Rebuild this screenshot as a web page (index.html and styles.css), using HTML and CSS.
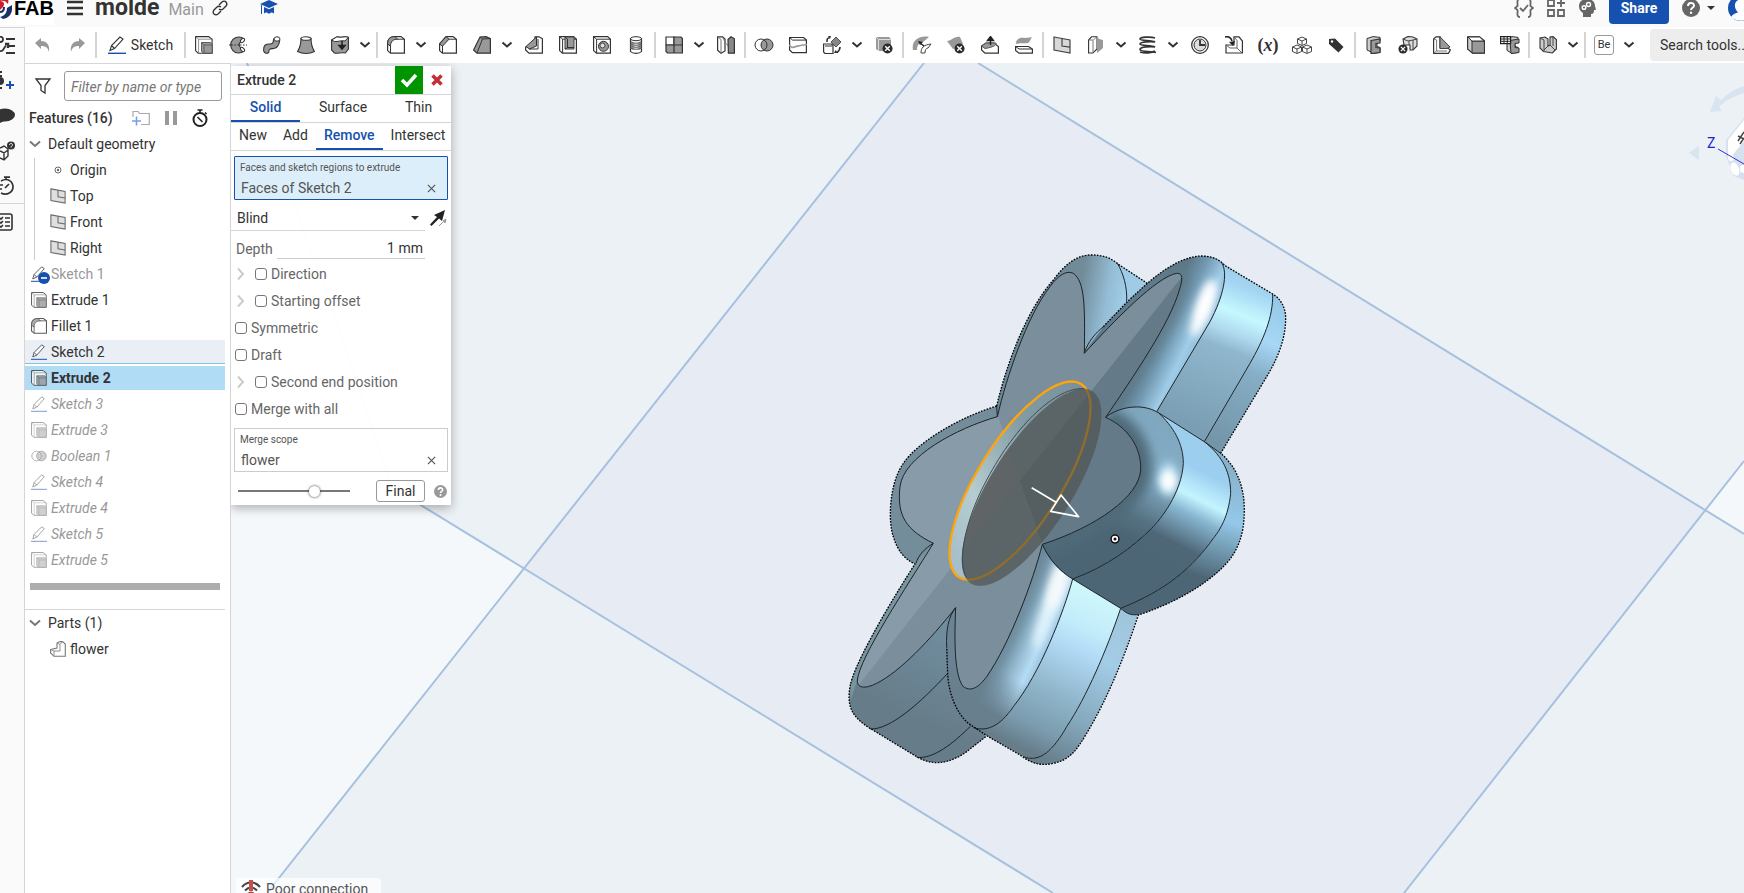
FILE: index.html
```html
<!DOCTYPE html>
<html lang="en">
<head>
    <meta charset="UTF-8">
    <meta name="viewport" content="width=device-width, initial-scale=1.0">
    <title>molde | Main</title>
    <link rel="stylesheet" href="styles.css">
</head>
<body>
    <!-- Shared icons -->
    <svg class="sprite" width="0" height="0" aria-hidden="true">
        <symbol id="i-caret" viewBox="0 0 12 8"><path d="M1.500 1.500L6 5.500l4.500-4" fill="none" stroke="#333" stroke-width="2"/></symbol>
        <symbol id="i-pencil" viewBox="0 0 18 18"><path d="M2 14.500l1.500-5L12 1l3 2-8.500 9.500zM3.500 9.500l3 3" fill="#fff" stroke="#333" stroke-width="1.100"/><path d="M0 17.300h18" stroke="#1651b0" stroke-width="1.400"/></symbol>
        <symbol id="i-extrude" viewBox="0 0 18 18"><path d="M.6.6h13l3.500 2.600v14h-14L.6 14.600z" fill="#fff" stroke="#333" stroke-width="1.100"/><path d="M.6.6l3 2.600v14M3.600 3.200h13.500" fill="none" stroke="#777" stroke-width=".8"/><path d="M6.500 6.500h9l1.700 2v8.700H8.500l-2-2z" fill="#999" stroke="#444" stroke-width=".8"/><path d="M6.500 6.500l2.500 2.500v8M9 9h8" fill="none" stroke="#555" stroke-width=".8"/></symbol>
        <symbol id="i-fillet" viewBox="0 0 18 18"><path d="M.6 8C.6 3 3 .6 8 .6h6l3.400 2.600v14H3.500L.6 14.600z" fill="#fff" stroke="#333" stroke-width="1.200"/><path d="M.6 8C.6 3 3 .6 8 .6l2.500 2.600c-4.500 0-7 2.300-7 7z" fill="#999" stroke="#333"/><path d="M3.500 10v7M10 3.200h7" stroke="#333" fill="none"/></symbol>
        <symbol id="i-plane" viewBox="0 0 18 18"><path d="M1 1l16 3v13L1 14z" fill="#d8d8d8" stroke="#444" stroke-width="1.200"/><path d="M9 2.500v7.500l8 1.200" fill="none" stroke="#444" stroke-width="1.200"/></symbol>
        <symbol id="i-boolean" viewBox="0 0 20 18"><circle cx="13" cy="9" r="6" fill="#999" stroke="#333"/><circle cx="7" cy="9" r="6" fill="none" stroke="#333"/></symbol>
        <symbol id="i-badx" viewBox="0 0 12 12"><circle cx="6" cy="6" r="5.500" fill="#2b2b2b"/><path d="M3.500 3.500l5 5m0-5l-5 5" stroke="#fff" stroke-width="1.500"/></symbol>
        <symbol id="i-chev" viewBox="0 0 8 14"><path d="M1 1.500L6 7l-5 5.500" fill="none" stroke="#ccc" stroke-width="2"/></symbol>
        <symbol id="i-x" viewBox="0 0 10 10"><path d="M1 1l8 8M9 1L1 9" stroke="#555" stroke-width="1.300"/></symbol>
        <symbol id="i-frame" viewBox="0 0 18 18"><path d="M2 2.500L8 .6l7 .8v4l-3 1v4l3 1v5l-6 1L2 14z" fill="#ccc" stroke="#333"/><path d="M6 4.500l9-1.500v4l-4 .5v4l4 .5v4.500l-9 1z" fill="#999" stroke="#333" stroke-width="1.200"/></symbol>
    </svg>

    <header class="topbar">
        <div class="topbar-inner">
            <div class="brand">
                <svg width="12" height="26" viewBox="0 0 12 26">
                    <path d="M0 6c3-1 6 0 8 3 1-4 0-7-3-8H0z" fill="#c8202c"/>
                    <path d="M0 6c4 0 5 3 3 6l-3 3z" fill="#c8202c"/>
                    <path d="M12 10c1 7-2 13-9 14l-3-2c5-1 7-5 7-9z" fill="#1b2f6b"/>
                    <path d="M0 17c3 0 4-2 4-5" stroke="#1b2f6b" stroke-width="2" fill="none"/>
                </svg>
                <span class="brand-name">FAB</span>
            </div>
            <button class="icon-btn menu" aria-label="Menu">
                <svg width="16" height="16" viewBox="0 0 16 16"><path d="M0 2h16M0 8h16M0 14h16" stroke="#333" stroke-width="2.500"/></svg>
            </button>
            <h1 class="doc-name">molde</h1>
            <span class="workspace-name">Main</span>
            <button class="icon-btn link" aria-label="Copy link">
                <svg width="16" height="16" viewBox="0 0 16 16" fill="none" stroke="#333" stroke-width="1.400"><path d="M7 5l3-3c1.200-1.200 3-1.200 4 0s1 2.800 0 4l-3 3c-1.200 1-2.800 1-4 0"/><path d="M9 11l-3 3c-1.200 1-2.800 1-4 0s-1-2.800 0-4l3-3c1.200-1 2.800-1 4 0"/></svg>
            </button>
            <button class="icon-btn learn" aria-label="Learning center">
                <svg width="18" height="18" viewBox="0 0 18 18" fill="#1651b0"><path d="M0 5l9-4 9 4-9 4z"/><path d="M4 8l5 2.300L14 8v6.500c-2-1.500-3-1.500-5 .5-2-2-3-2-5-.5z"/><path d="M1.500 6v9" stroke="#1651b0"/></svg>
            </button>
            <div class="topbar-right">
                <button class="icon-btn" aria-label="Checks">
                    <svg width="20" height="20" viewBox="0 0 20 20" fill="none" stroke="#666" stroke-width="1.800"><path d="M6 1C2 1 4 6 3.500 8L1 10l2.500 2C4 14 2 19 6 19M14 1c4 0 2 5 2.500 7L19 10l-2.500 2c-.5 2 1.500 7-2.500 7M6 10l3 3 5-6"/></svg>
                </button>
                <button class="icon-btn" aria-label="App store">
                    <svg width="18" height="18" viewBox="0 0 18 18" fill="none" stroke="#666" stroke-width="1.800"><path d="M1 1h6v6H1zM1 11h6v6H1zM11 11h6v6h-6zM14 0v8M10 4h8"/></svg>
                </button>
                <button class="icon-btn" aria-label="AI advisor">
                    <svg width="18" height="20" viewBox="0 0 18 20"><path d="M9 1c5 0 8 3 8 7l1 4h-2c0 3-1 4-3 4v3H5v-4C2 13 1 11 1 8c0-4 3-7 8-7z" fill="#666"/><circle cx="6" cy="9.500" r="1.800" fill="none" stroke="#fff" stroke-width="1.500"/><circle cx="10.500" cy="6.500" r="2" fill="none" stroke="#fff" stroke-width="1.500"/></svg>
                </button>
                <button class="share">Share</button>
                <button class="icon-btn help" aria-label="Help">
                    <svg width="18" height="18" viewBox="0 0 18 18"><circle cx="9" cy="9" r="9" fill="#666"/><path d="M6 7c0-4 6-4 6-.5C12 9 9 8.500 9 11" fill="none" stroke="#fff" stroke-width="2"/><circle cx="9" cy="13.800" r="1.200" fill="#fff"/></svg>
                    <svg width="8" height="4" viewBox="0 0 8 4"><path d="M0 0h8L4 4z" fill="#333"/></svg>
                </button>
                <button class="icon-btn avatar" aria-label="Account">
                    <svg width="26" height="26" viewBox="0 0 26 26"><circle cx="13" cy="13" r="13" fill="#1651b0"/><path d="M3 22c2-3 5-4 7-4.500-5-5-4-13 3-13s8 8 3 13c2 .5 5 1.500 7 4.500-6 5-14 5-20 0z" fill="#fff"/></svg>
                </button>
            </div>
        </div>
    </header>

    <div class="main">
        <aside class="rail">
            <button aria-label="Feature list"><svg width="17" height="20" viewBox="0 0 17 20" fill="none" stroke="#333" stroke-width="1.800"><path d="M6 3h9M9 10h6M6 17h9"/><path d="M0 1c4-1 4 5 0 5M0 15c4 1 4-5 6-5"/><path d="M5 8h3v4" stroke-width="2.500"/></svg></button>
            <button aria-label="Insert"><svg width="17" height="20" viewBox="0 0 17 20"><path d="M0 1h2M0 5h2M0 17h2" stroke="#333" stroke-width="2"/><circle cx="0" cy="10" r="4" fill="#333"/><path d="M6 14h8M10 10v8" stroke="#1651b0" stroke-width="2"/></svg></button>
            <button aria-label="Comments"><svg width="17" height="20" viewBox="0 0 17 20"><ellipse cx="5" cy="9" rx="10" ry="6.500" fill="#333"/><path d="M-2 13v5l6-3z" fill="#333"/></svg></button>
            <button aria-label="Part help"><svg width="17" height="20" viewBox="0 0 17 20"><path d="M0 7l4-2 4 3v7l-4 4-4-2M0 10l4 2 4-3M4 12v6" fill="none" stroke="#333" stroke-width="1.400"/><circle cx="11" cy="4.500" r="4" fill="#333"/><path d="M9.500 4c0-2 3-2 3 0 0 1-1.500 1-1.500 2.500" stroke="#fff" fill="none"/></svg></button>
            <button aria-label="Versions"><svg width="17" height="20" viewBox="0 0 17 20" fill="none" stroke="#333" stroke-width="1.700"><path d="M1 5c7-4 12 1 12 6s-6 9-12 6M4 1.200h6M6 1v3M0 9h3M0 13h2M5 12l4-4"/></svg></button>
            <hr>
            <button aria-label="Tasks"><svg width="17" height="20" viewBox="0 0 17 20" fill="none" stroke="#333" stroke-width="1.600"><path d="M0 2h10c1.500 0 2 .5 2 2v12c0 1.500-.5 2-2 2H0M5 6h5M5 10h5M5 14h5M0 6l1 1 2-2M0 10l1 1 2-2M0 14l1 1 2-2"/></svg></button>
        </aside>

        <div class="studio">
            <div class="toolbar">
                <button class="tool" aria-label="Undo"><svg width="16" height="16" viewBox="0 0 16 16"><path d="M0 6l6-5v3c6 0 9 4 8 11-1-4-3-6-8-6v3z" fill="#999"/></svg></button>
                <button class="tool" aria-label="Redo"><svg width="16" height="16" viewBox="0 0 16 16"><path d="M16 6l-6-5v3C4 4 1 8 2 15c1-4 3-6 8-6v3z" fill="#999"/></svg></button>
                <span class="sep"></span>
                <button class="tool sketch"><svg width="18" height="18"><use href="#i-pencil"/></svg>Sketch</button>
                <span class="sep"></span>
                <button class="tool" aria-label="Extrude"><svg width="18" height="18"><use href="#i-extrude"/></svg></button>
                <button class="tool" aria-label="Revolve"><svg width="18" height="18" viewBox="0 0 18 18"><path d="M15 3a8 8 0 1 0 0 12l-2.500-3a4 4 0 0 1-2.500-3 4 4 0 0 1 3-3.500z" fill="#999" stroke="#333" stroke-width="1.100"/><ellipse cx="13.500" cy="4.500" rx="1.500" ry="2.500" transform="rotate(45 13.500 4.500)" fill="#fff" stroke="#333"/><ellipse cx="13.500" cy="13.500" rx="1.500" ry="2.500" transform="rotate(-45 13.500 13.500)" fill="#fff" stroke="#333"/><path d="M0 9h18" stroke="#333" stroke-dasharray="4 1.500 1.500 1.500"/></svg></button>
                <button class="tool" aria-label="Sweep"><svg width="18" height="18" viewBox="0 0 18 18"><path d="M.7 15c-.5-6 2-7 6-7s3.300-2 4-5l6 1.500c-.7 5-2 7.500-6 8-4 .4-4.700 0-5 4-1.500 1.300-4 1-5-1.500z" fill="#999" stroke="#333" stroke-width="1.100"/><ellipse cx="14" cy="3" rx="3" ry="2.200" fill="#fff" stroke="#333"/></svg></button>
                <button class="tool" aria-label="Loft"><svg width="18" height="18" viewBox="0 0 18 18"><path d="M4 2.500c0 6-1.500 10-3.500 13 5 2.500 12 2.500 17 0-2-3-3.500-7-3.500-13z" fill="#999" stroke="#333" stroke-width="1.100"/><ellipse cx="9" cy="2.500" rx="5" ry="1.800" fill="#fff" stroke="#333" stroke-width="1.100"/></svg></button>
                <button class="tool" aria-label="Thicken"><svg width="18" height="18" viewBox="0 0 18 18"><path d="M.6 4L6 .8c4 1.500 8-1 11.400.5V13l-3 4c-4-1-8 1-11 0l-2.800-3z" fill="#999" stroke="#333" stroke-width="1.100"/><path d="M.6 4L6 .8c4 1.500 8-1 11.400.5L14 5C10 4 7 6 3.500 5.500z" fill="#fff" stroke="#333"/><path d="M11 5v5M8 9.500l3 3.500 3-3.500z" stroke="#222" stroke-width="1.500" fill="#222"/></svg></button>
                <button class="drop" aria-label="More solid tools"><svg width="12" height="8"><use href="#i-caret"/></svg></button>
                <span class="sep"></span>
                <button class="tool" aria-label="Fillet"><svg width="18" height="18"><use href="#i-fillet"/></svg></button>
                <button class="drop" aria-label="More fillets"><svg width="12" height="8"><use href="#i-caret"/></svg></button>
                <button class="tool" aria-label="Chamfer"><svg width="18" height="18" viewBox="0 0 18 18"><path d="M.6 8L7 .6h7l3.400 2.600v14H3.500L.6 14.600z" fill="#fff" stroke="#333" stroke-width="1.200"/><path d="M.6 8L7 .6l3 2.600-6.500 7z" fill="#999" stroke="#333"/><path d="M3.500 10v7M10 3.200h7" stroke="#333"/></svg></button>
                <button class="tool" aria-label="Draft"><svg width="18" height="18" viewBox="0 0 18 18"><path d="M.6 14L7 1l6-.4 4.400 2v14.600H4z" fill="#999" stroke="#333" stroke-width="1.200"/><path d="M4 17L9.500 3 17 2.600M9.500 3L7 1" fill="none" stroke="#333"/></svg></button>
                <button class="drop" aria-label="More drafts"><svg width="12" height="8"><use href="#i-caret"/></svg></button>
                <button class="tool" aria-label="Rib"><svg width="18" height="18" viewBox="0 0 18 18"><path d="M.6 11L10 8V.8h4l3.400 2v14.400H4L.6 14z" fill="#fff" stroke="#333" stroke-width="1.200"/><path d="M1 10.500L11.500 1v9l-7 3z" fill="#999" stroke="#333"/><path d="M13 3v10H4" fill="none" stroke="#333"/></svg></button>
                <button class="tool" aria-label="Shell"><svg width="18" height="18" viewBox="0 0 18 18"><path d="M.6.6h14l2.800 2.600v14H3.500L.6 14.600z" fill="#fff" stroke="#333" stroke-width="1.200"/><path d="M.6.6l3 2.600v14M3.600 3.200h14" stroke="#333" fill="none"/><path d="M6 1h9v12H6z" fill="#999" stroke="#444"/><path d="M6 1l2.500 2v8.500H15M8.500 11.500L6 13" fill="none" stroke="#333"/></svg></button>
                <button class="tool" aria-label="Hole"><svg width="18" height="18" viewBox="0 0 18 18"><path d="M.6.6h14l2.800 2.600v14H3.500L.6 14.600z" fill="#fff" stroke="#333" stroke-width="1.200"/><path d="M.6.6l3 2.600v14M3.600 3.200h14" stroke="#333" fill="none"/><circle cx="10.500" cy="10.300" r="5" fill="#999" stroke="#333"/><circle cx="9.500" cy="9.500" r="2.500" fill="#ddd" stroke="#444"/></svg></button>
                <button class="tool" aria-label="Thread"><svg width="18" height="18" viewBox="0 0 18 18"><path d="M3.500 2.500v13c2 2.500 9 2.500 11 0v-13z" fill="#fff" stroke="#333" stroke-width="1.200"/><path d="M3.500 6c3 1.500 8 1.500 11 0M3.500 8c3 1.500 8 1.500 11 0M3.500 10c3 1.500 8 1.500 11 0M3.500 12c3 1.500 8 1.500 11 0" fill="none" stroke="#666" stroke-width="1.400"/><ellipse cx="9" cy="2.700" rx="5.500" ry="2" fill="#fff" stroke="#333"/></svg></button>
                <span class="sep"></span>
                <button class="tool" aria-label="Pattern"><svg width="18" height="18" viewBox="0 0 18 18" stroke="#333" stroke-width="1.200" fill="#999"><path d="M1 1h8v8H1z" fill="#fff"/><path d="M9 1h7l1.400 1.500V9H9zM1 9h8v8H2.500L1 15.500zM9 9h8.400v8H9z"/></svg></button>
                <button class="drop" aria-label="More patterns"><svg width="12" height="8"><use href="#i-caret"/></svg></button>
                <button class="tool" aria-label="Mirror"><svg width="18" height="18" viewBox="0 0 18 18"><path d="M.6.8h5L8 3v12l-4 2.200-3.400-3z" fill="#fff" stroke="#333" stroke-width="1.200"/><path d="M.6.8L4 3.500v13.500M5.500 1l3 6 3 3" fill="none" stroke="#777"/><path d="M11 3.500L14 .8l3.400 2v14.400h-6z" fill="#888" stroke="#333" stroke-width="1.200"/></svg></button>
                <span class="sep"></span>
                <button class="tool" aria-label="Boolean"><svg width="20" height="18"><use href="#i-boolean"/></svg></button>
                <button class="tool" aria-label="Split"><svg width="18" height="18" viewBox="0 0 18 18"><path d="M.6 1.500h14l2.800 2.600v12.600h-14L.6 14z" fill="#fff" stroke="#333" stroke-width="1.200"/><path d="M.6 1.500l3 2.600h14" fill="none" stroke="#333"/><path d="M0 9l3 2.500c5-1 7-2.500 15-3" fill="none" stroke="#999" stroke-width="1.600"/></svg></button>
                <button class="tool" aria-label="Transform"><svg width="18" height="18" viewBox="0 0 18 18"><path d="M.6 8h8l1.400 1.500v8H2L.6 16zM2 10h7" fill="#fff" stroke="#333" stroke-width="1.200"/><path d="M13 1l5 5-5 5-5-5z" fill="#888" stroke="#555"/><path d="M4 6c0-3 0-4 3-4.500M17 11c0 3-1 4-3 5.500" fill="none" stroke="#333" stroke-width="1.600"/><path d="M5 0h3L7 3zM11 17l1.500-3 2.500 3z" fill="#333"/></svg></button>
                <button class="drop" aria-label="More transforms"><svg width="12" height="8"><use href="#i-caret"/></svg></button>
                <button class="tool" aria-label="Delete part"><svg width="18" height="18" viewBox="0 0 18 18"><path d="M1 1h13l2 2v12H3.500L1 13z" fill="#999"/><path d="M1 1l2.500 2.500V15M3.500 3.500H16" stroke="#ddd" fill="none"/><use href="#i-badx" x="7" y="7" width="11" height="11"/></svg></button>
                <span class="sep"></span>
                <button class="tool" aria-label="Modify fillet"><svg width="20" height="18" viewBox="0 0 20 18"><path d="M1 14C-1 5 7-1 17 1L11 6c-4 1-6 3-6 8z" fill="#999"/><path d="M9 17c0-5 2-8 10-9l-3 4c-2 0-3 2-3 5z" fill="#fff" stroke="#444"/><path d="M12 10L8 7" stroke="#222" stroke-width="1.500"/><path d="M6 5l5 1-3 3z" fill="#222"/></svg></button>
                <button class="tool" aria-label="Delete face"><svg width="18" height="18" viewBox="0 0 18 18"><path d="M0 5c5 0 7-5 13-4l3 7c-5 0-6 4-10 5z" fill="#999"/><use href="#i-badx" x="7" y="7" width="11" height="11"/></svg></button>
                <button class="tool" aria-label="Move face"><svg width="18" height="18" viewBox="0 0 18 18"><path d="M.6 10L5 7h8l4.400 3.500v6.700H4L.6 14z" fill="#fff" stroke="#333" stroke-width="1.200"/><path d="M.6 10L5 7h10c1 1-1 4-11 5.500z" fill="#999" stroke="#555"/><path d="M9.500 9V3M6.500 4.500l3-4 3 4z" stroke="#222" stroke-width="1.400" fill="#222"/></svg></button>
                <button class="tool" aria-label="Replace face"><svg width="18" height="18" viewBox="0 0 18 18"><path d="M.6 10.500h13l3.800 2.500v4.200H4L.6 14.500z" fill="#fff" stroke="#333" stroke-width="1.200"/><path d="M.6 10.500L4 13h13" fill="none" stroke="#333"/><path d="M1 8c0-3 1-5 4-6 3-.5 6 .5 12-1-2 3-2 5-4 6-5 .5-8-.5-12 1z" fill="#999"/></svg></button>
                <span class="sep"></span>
                <button class="tool" aria-label="Plane"><svg width="18" height="18"><use href="#i-plane"/></svg></button>
                <button class="tool" aria-label="Split plane"><svg width="18" height="18" viewBox="0 0 18 18"><path d="M1.600 4l3-3.200H10V13l-4 4H1.600z" fill="#fff" stroke="#333" stroke-width="1.100"/><path d="M6 17V4.500L9.500 1M1.600 4H6" fill="none" stroke="#777"/><path d="M10 0l2 3 4 1v8l-6 5z" fill="#999"/></svg></button>
                <button class="drop" aria-label="More planes"><svg width="12" height="8"><use href="#i-caret"/></svg></button>
                <button class="tool" aria-label="Helix"><svg width="18" height="18" viewBox="0 0 18 18" fill="none" stroke="#333" stroke-width="1.700"><path d="M16 2C12 .5 1 1 1 3s12 1 15 3C12 5 1 6 1 8s12 1 15 3c-4-1-15 0-15 2.500S12 15 17 16.500"/><path d="M1 16c5 1.500 12 1 15-1"/></svg></button>
                <button class="drop" aria-label="More curves"><svg width="12" height="8"><use href="#i-caret"/></svg></button>
                <button class="tool" aria-label="Mass clock"><svg width="18" height="18" viewBox="0 0 18 18" fill="none" stroke="#333"><circle cx="9" cy="9" r="8.300" stroke-width="1.300"/><circle cx="9" cy="9" r="6" fill="#ddd"/><path d="M9 4v5h5" stroke-width="1.800"/></svg></button>
                <button class="tool" aria-label="Derived"><svg width="18" height="18" viewBox="0 0 18 18"><path d="M1 9v8h16.400V5L14 .8H9V9z" fill="#fff" stroke="#333" stroke-width="1.200"/><path d="M9 .8l3 3.700V12H5l-4-3M12 12l5 5" fill="none" stroke="#666"/><path d="M0 1c4-1 6 1 7 4" stroke="#222" stroke-width="1.600" fill="none"/><path d="M4 6l6-1-2 5z" fill="#222"/></svg></button>
                <button class="tool variable" aria-label="Variable">(<i>x</i>)</button>
                <button class="tool" aria-label="Composite part"><svg width="20" height="18" viewBox="0 0 20 18" fill="#fff" stroke="#444"><path d="M5.500 3l4.500-2 4.500 2v4.500L10 9.500l-4.500-2zM.5 11L5 9l4.500 2v4.500L5 17.500.5 15.500zM10.500 11L15 9l4.500 2v4.500l-4.500 2-4.500-2z"/><path d="M5.500 3L10 5l4.500-2M10 5v4M.5 11L5 13l4.500-2M5 13v4M10.500 11l4.500 2 4.500-2M15 13v4" fill="none"/></svg></button>
                <button class="tool" aria-label="Tag"><svg width="18" height="18" viewBox="0 0 18 18"><path d="M2 3l6-.5 8.500 8.500-5 5.500L2 8z" fill="#333"/><circle cx="5" cy="5.500" r="1.200" fill="#fff"/></svg></button>
                <span class="sep"></span>
                <button class="tool" aria-label="Frame"><svg width="18" height="18"><use href="#i-frame"/></svg></button>
                <button class="tool" aria-label="Frame trim"><svg width="20" height="18" viewBox="0 0 20 18"><path d="M5 3l5-2.500 5 .5 4 2v7l-4 4h-3V9H6z" fill="#ddd" stroke="#333" stroke-width="1.100"/><path d="M5 3l5 2 5-1 4-1M11 5v4M15 4v10" fill="none" stroke="#444"/><use href="#i-badx" x="0" y="8" width="10" height="10"/></svg></button>
                <button class="tool" aria-label="Gusset"><svg width="18" height="18" viewBox="0 0 18 18"><path d="M.6 3L3 .8h4v11h7l3.400 2-2 3.500H.6z" fill="#fff" stroke="#333" stroke-width="1.200"/><path d="M7 .8L17 11l-3 1.500H7z" fill="#999" stroke="#444"/><path d="M.6 3l3 1v11L.6 17M3.600 15H14" fill="none" stroke="#777"/></svg></button>
                <button class="tool" aria-label="End cap"><svg width="18" height="18" viewBox="0 0 18 18"><path d="M.6.8h12l4.800 4v12.400h-12L.6 13z" fill="#ccc" stroke="#333" stroke-width="1.200"/><path d="M5 5h12.400v12H5z" fill="#999" stroke="#333"/><path d="M1 1l4 4h12l-4.500-4z" fill="#fff" stroke="#333"/></svg></button>
                <button class="tool" aria-label="Cut list"><svg width="20" height="18" viewBox="0 0 20 18"><path d="M7 2.500L12 .6l6 .8v4l-3 1v4l3 1v5l-6 1-5-3z" fill="#ccc" stroke="#333"/><path d="M10 4.500l9-1.500v4l-4 .5v4l4 .5v4.500l-8 1z" fill="#999" stroke="#333"/><path d="M.6.6h10v7H.6z" fill="#fff" stroke="#222" stroke-width="1.200"/><path d="M.6 3h10M.6 5.300h10M4 .6v7M7.300.6v7" stroke="#222"/></svg></button>
                <span class="sep"></span>
                <button class="tool" aria-label="Sheet metal"><svg width="18" height="18" viewBox="0 0 18 18"><path d="M1 2l5-1 3 2v7l2-1V1l3-.4 3.400 3V13l-4 4-9-1.500L1 12z" fill="#ccc" stroke="#333" stroke-width="1.100"/><path d="M1 2l4 2v11M9 10l-4 4M11 9l5 5M14 1v9" fill="none" stroke="#444"/></svg></button>
                <button class="drop" aria-label="More sheet metal"><svg width="12" height="8"><use href="#i-caret"/></svg></button>
                <span class="sep"></span>
                <button class="tool" aria-label="Custom feature"><span class="be">Be</span></button>
                <button class="drop" aria-label="More custom features"><svg width="12" height="8"><use href="#i-caret"/></svg></button>
                <input class="search-tools" type="text" placeholder="Search tools..." aria-label="Search tools">
            </div>

            <div class="workspace">
                <section class="tree">
                    <div class="filter">
                        <svg width="18" height="18" viewBox="0 0 18 18"><path d="M2 2h14l-5 6.500V16l-4-2.500v-5z" fill="#fff" stroke="#333" stroke-width="1.300"/></svg>
                        <input type="text" placeholder="Filter by name or type" aria-label="Filter by name or type">
                    </div>
                    <div class="tree-head">
                        <h2>Features (16)</h2>
                        <button class="icon-btn" aria-label="Add folder"><svg width="18" height="16" viewBox="0 0 18 16"><path d="M1 7V1.500h5l1.500 2H17.300v11H9" fill="none" stroke="#aaa" stroke-width="1.200"/><path d="M0 11h9M4.500 6.500v9" stroke="#7e9fdb" stroke-width="1.600"/></svg></button>
                        <button class="icon-btn" aria-label="Suspend"><svg width="12" height="14" viewBox="0 0 12 14"><path d="M0 0h4v14H0zM8 0h4v14H8z" fill="#999"/></svg></button>
                        <button class="icon-btn" aria-label="Regeneration times"><svg width="16" height="18" viewBox="0 0 16 18"><circle cx="8" cy="10.500" r="6.500" fill="none" stroke="#222" stroke-width="2"/><path d="M5.500 1h5M8 1v3M10.500 13L5.500 8M13 3.500l1.500 1.500" stroke="#222" stroke-width="1.600"/></svg></button>
                    </div>
                    <ul class="features">
                        <li class="folder"><svg width="12" height="8" viewBox="0 0 12 8"><path d="M1 1.500l5 4.500 5-4.500" fill="none" stroke="#555" stroke-width="2"/></svg>Default geometry</li>
                        <li class="nested">
                            <ul>
                                <li><svg width="16" height="16" viewBox="0 0 16 16"><circle cx="8" cy="8" r="3" fill="none" stroke="#444"/><circle cx="8" cy="8" r="1.200" fill="#444"/></svg>Origin</li>
                                <li><svg width="16" height="16"><use href="#i-plane"/></svg>Top</li>
                                <li><svg width="16" height="16"><use href="#i-plane"/></svg>Front</li>
                                <li><svg width="16" height="16"><use href="#i-plane"/></svg>Right</li>
                            </ul>
                        </li>
                        <li class="hidden-sketch"><svg width="16" height="16"><use href="#i-pencil"/></svg>Sketch 1<svg class="badge" width="12" height="12" viewBox="0 0 12 12"><circle cx="6" cy="6" r="6" fill="#1651b0"/><path d="M3 6h6" stroke="#fff" stroke-width="1.600"/></svg></li>
                        <li><svg width="16" height="16"><use href="#i-extrude"/></svg>Extrude 1</li>
                        <li><svg width="16" height="16"><use href="#i-fillet"/></svg>Fillet 1</li>
                        <li class="hovered"><svg width="16" height="16"><use href="#i-pencil"/></svg>Sketch 2</li>
                        <li class="selected"><svg width="16" height="16"><use href="#i-extrude"/></svg>Extrude 2</li>
                        <li class="rolled"><svg width="16" height="16"><use href="#i-pencil"/></svg>Sketch 3</li>
                        <li class="rolled"><svg width="16" height="16"><use href="#i-extrude"/></svg>Extrude 3</li>
                        <li class="rolled"><svg width="16" height="16"><use href="#i-boolean"/></svg>Boolean 1</li>
                        <li class="rolled"><svg width="16" height="16"><use href="#i-pencil"/></svg>Sketch 4</li>
                        <li class="rolled"><svg width="16" height="16"><use href="#i-extrude"/></svg>Extrude 4</li>
                        <li class="rolled"><svg width="16" height="16"><use href="#i-pencil"/></svg>Sketch 5</li>
                        <li class="rolled"><svg width="16" height="16"><use href="#i-extrude"/></svg>Extrude 5</li>
                    </ul>
                    <div class="rollback"></div>
                    <ul class="features parts">
                        <li class="folder"><svg width="12" height="8" viewBox="0 0 12 8"><path d="M1 1.500l5 4.500 5-4.500" fill="none" stroke="#555" stroke-width="2"/></svg>Parts (1)</li>
                        <li class="part"><svg width="16" height="16" viewBox="0 0 16 16"><path d="M.6 8.500L7 7V2l3-1.400h2.500L15.300 3v12.300H4L.6 12z" fill="#fff" stroke="#555" stroke-width="1.100"/><path d="M7 2l3 1.500V10H4L.6 8.500M4 10v5M10 3.500l2.500-3" fill="none" stroke="#777"/></svg>flower</li>
                    </ul>
                </section>

                <main class="viewport">
                    <svg class="scene" viewBox="231 63 1513 830" preserveAspectRatio="xMinYMin slice" role="img" aria-label="flower part">
                        <defs>
                            <linearGradient id="gA" gradientUnits="userSpaceOnUse" x1="630" y1="160" x2="860" y2="200"><stop offset="0" stop-color="#6c8796"/><stop offset=".4" stop-color="#738c9a"/><stop offset=".75" stop-color="#93bcd5"/><stop offset="1" stop-color="#a3cfea"/></linearGradient>
                            <linearGradient id="gB" gradientUnits="userSpaceOnUse" x1="975" y1="240" x2="1120" y2="310"><stop offset="0" stop-color="#5c7888"/><stop offset=".3" stop-color="#7198b0"/><stop offset=".65" stop-color="#9fcce8"/><stop offset="1" stop-color="#88b4ce"/></linearGradient>
                            <linearGradient id="gBs" gradientUnits="userSpaceOnUse" x1="1270" y1="130" x2="1090" y2="600"><stop offset="0" stop-color="#9accec"/><stop offset=".12" stop-color="#a4d6f2"/><stop offset=".28" stop-color="#c6f8ff"/><stop offset=".4" stop-color="#aed8ee"/><stop offset=".5" stop-color="#8fb6cc"/><stop offset="1" stop-color="#7a9fb5"/></linearGradient>
                            <linearGradient id="gBo" gradientUnits="userSpaceOnUse" x1="1300" y1="200" x2="1130" y2="640"><stop offset="0" stop-color="#94c6e6"/><stop offset=".28" stop-color="#a6d8f6"/><stop offset=".5" stop-color="#86aec6"/><stop offset="1" stop-color="#7395a8"/></linearGradient>
                            <linearGradient id="gC" gradientUnits="userSpaceOnUse" x1="980" y1="560" x2="780" y2="970"><stop offset="0" stop-color="#7ea6bd"/><stop offset=".4" stop-color="#86b0c9"/><stop offset=".68" stop-color="#567282"/><stop offset=".82" stop-color="#4c6574"/></linearGradient>
                            <linearGradient id="gCs" gradientUnits="userSpaceOnUse" x1="1130" y1="640" x2="960" y2="980"><stop offset="0" stop-color="#9ccdec"/><stop offset=".25" stop-color="#9ccff0"/><stop offset=".46" stop-color="#c4f4ff"/><stop offset=".6" stop-color="#86b4cf"/><stop offset=".85" stop-color="#4f6878"/><stop offset="1" stop-color="#4d6675"/></linearGradient>
                            <linearGradient id="gCo" gradientUnits="userSpaceOnUse" x1="1180" y1="720" x2="1080" y2="1040"><stop offset="0" stop-color="#88b2ca"/><stop offset=".45" stop-color="#94c8ea"/><stop offset=".65" stop-color="#7aa5be"/><stop offset="1" stop-color="#4d6676"/></linearGradient>
                            <linearGradient id="gD" gradientUnits="userSpaceOnUse" x1="490" y1="1230" x2="625" y2="1290"><stop offset="0" stop-color="#6b8494"/><stop offset=".3" stop-color="#84a8bd"/><stop offset=".7" stop-color="#b5dcf5"/><stop offset="1" stop-color="#8fb9d3"/></linearGradient>
                            <linearGradient id="gDf" gradientUnits="userSpaceOnUse" x1="500" y1="1330" x2="440" y2="1440"><stop offset="0" stop-color="#687f8d" stop-opacity="0"/><stop offset="1" stop-color="#687f8d"/></linearGradient>
                            <linearGradient id="gDs" gradientUnits="userSpaceOnUse" x1="780" y1="1100" x2="560" y2="1560"><stop offset="0" stop-color="#cdf7fa"/><stop offset=".2" stop-color="#c3ecfa"/><stop offset=".34" stop-color="#b3daf6"/><stop offset=".62" stop-color="#90b6cb"/><stop offset=".85" stop-color="#7b9caf"/><stop offset="1" stop-color="#677d8a"/></linearGradient>
                            <linearGradient id="gDo" gradientUnits="userSpaceOnUse" x1="850" y1="1160" x2="640" y2="1600"><stop offset="0" stop-color="#a0c6dd"/><stop offset=".3" stop-color="#a3cce6"/><stop offset=".7" stop-color="#85a9bd"/><stop offset="1" stop-color="#687f8c"/></linearGradient>
                            <linearGradient id="gE" gradientUnits="userSpaceOnUse" x1="300" y1="1180" x2="180" y2="1450"><stop offset="0" stop-color="#708e9f"/><stop offset="1" stop-color="#677c89"/></linearGradient>
                            <linearGradient id="gCut" gradientUnits="userSpaceOnUse" x1="680" y1="460" x2="360" y2="1040"><stop offset="0" stop-color="#78909b"/><stop offset=".35" stop-color="#829ba4"/><stop offset=".7" stop-color="#b5cdd0"/><stop offset="1" stop-color="#a0bac9"/></linearGradient>
                            <filter id="soft" x="-150%" y="-50%" width="400%" height="200%"><feGaussianBlur stdDeviation="13"/></filter>
                            <filter id="shade" x="-30%" y="-30%" width="160%" height="160%"><feGaussianBlur stdDeviation="16"/></filter>
                            <clipPath id="face"><path d="M472 560C500 440 560 260 630 170C655 135 680 120 700 130C735 155 735 230 733 370C820 275 950 140 1010 130C1030 128 1028 150 1018 180C990 280 880 440 797 562C860 590 905 650 902 720C897 800 770 890 607 943C580 1050 510 1240 440 1340C410 1380 390 1383 370 1370C345 1340 342 1250 347 1133C270 1230 180 1325 110 1360C75 1378 50 1375 52 1350C60 1280 200 1070 280 940C200 900 170 860 180 770C190 680 350 595 472 560z"/></clipPath>
                            <clipPath id="filB"><path d="M731 370C820 270 950 90 1090 78C1125 80 1145 90 1152 107C1160 150 1150 200 1110 275L950 545L797 562z"/></clipPath>
                            <clipPath id="filC"><path d="M797 562C830 535 900 515 955 548C1000 590 1030 640 1030 700C1025 790 960 870 935 895C880 950 800 1010 698 1047C650 1020 620 980 607 943z"/></clipPath>
                            <clipPath id="filD"><path d="M607 943C625 985 660 1025 698 1047C670 1150 600 1330 520 1430C480 1490 440 1505 400 1493C350 1460 325 1400 323 1330L320 1230L347 1133z"/></clipPath>
                            <clipPath id="cut"><ellipse cx="575" cy="772" rx="123" ry="341" transform="rotate(32.300 575 772)"/></clipPath>
                        </defs>

                        <!-- Reference planes -->
                        <rect x="231" y="63" width="1513" height="830" fill="#f4f8fb"/>
                        <path d="M247 63L393 488L1053 893H1744V63z" fill="#ecf1f5"/>
                        <path d="M924 63L267 893H1404L1744 461V63z" fill="#ecf1f5"/>
                        <path d="M924 63L524 568L1053 893H1404L1706 510L978 63z" fill="#e7ebf3"/>
                        <path d="M1744 461L1706 510L1744 534z" fill="#f4f8fb"/>
                        <path d="M924 63L267 893M978 63L1744 534M247 63L393 488L1053 893M1744 461L1404 893" fill="none" stroke="#a6c1e0" stroke-width="2"/>

                        <!-- Flower body, petals drawn back to front -->
                        <g transform="translate(840 230) scale(.33333)" stroke-linejoin="round">
                            <path d="M470 560L470 528C500 400 560 240 640 150C670 110 705 76 750 75C790 74 815 85 835 103L922 160L862 215L731 372z" fill="url(#gA)"/>
                            <path d="M832 100C850 130 862 170 860 215L922 160z" fill="#9fcbe6"/>
                            <path d="M470 528C350 565 230 640 190 700C145 765 145 880 160 920C175 970 200 990 225 1002L300 1000L500 600z" fill="#748d9a"/>
                            <path d="M225 1002C130 1150 40 1310 30 1370C20 1430 35 1460 90 1495L230 1580C280 1610 330 1600 380 1565L437 1520L347 1133L400 900z" fill="url(#gE)"/>
                            <path d="M225 1002C130 1150 40 1310 30 1370L32 1410L52 1350L280 940z" fill="#7895a0"/>

                            <path d="M731 370L790 290L862 215L922 160C980 110 1040 76 1090 78C1125 80 1145 90 1152 107C1160 150 1150 200 1110 275L950 545L797 562z" fill="url(#gB)"/>
                            <g clip-path="url(#filB)">
                                <path d="M731 370C820 275 950 140 1010 130C1030 128 1028 150 1018 180C990 280 880 440 797 562" fill="none" stroke="#607b8a" stroke-width="36" filter="url(#shade)"/>
                                <ellipse cx="1090" cy="235" rx="22" ry="90" transform="rotate(20 1090 235)" fill="#fff" filter="url(#soft)"/>
                                <ellipse cx="1098" cy="215" rx="13" ry="62" transform="rotate(17 1098 215)" fill="#fff" filter="url(#soft)"/>
                            </g>
                            <path d="M1145 98C1165 130 1150 200 1110 275L950 545L1093 635L1230 400C1270 330 1300 260 1298 192z" fill="url(#gBs)"/>
                            <path d="M1298 192C1320 205 1337 230 1337 265C1337 330 1310 390 1280 440L1142 670L1093 635L1230 400C1270 330 1300 260 1298 192z" fill="url(#gBo)"/>

                            <path d="M607 943C625 985 660 1025 698 1047C670 1150 600 1330 520 1430C480 1490 440 1505 400 1493C350 1460 325 1400 323 1330L320 1250C318 1200 325 1160 347 1133z" fill="url(#gD)"/>
                            <g clip-path="url(#filD)">
                                <ellipse cx="625" cy="1140" rx="20" ry="125" transform="rotate(19 625 1140)" fill="#e4f6fd" filter="url(#soft)"/>
                                <ellipse cx="658" cy="1050" rx="26" ry="95" transform="rotate(16 658 1050)" fill="#f6f9fb" filter="url(#soft)"/>
                                <path d="M607 943C580 1050 510 1240 440 1340" fill="none" stroke="#6d8b9c" stroke-width="30" filter="url(#shade)"/>
                                <path d="M300 1200H620L520 1520H300z" fill="url(#gDf)"/>
                            </g>
                            <path d="M698 1047C670 1150 600 1330 520 1430C480 1490 440 1505 400 1493L445 1520L550 1580C600 1600 640 1560 680 1490C740 1400 800 1260 842 1135z" fill="url(#gDs)"/>
                            <path d="M842 1135C800 1260 740 1400 680 1490C640 1560 600 1600 550 1580C580 1605 610 1607 640 1600C690 1590 710 1560 740 1510C800 1410 850 1290 893 1158z" fill="url(#gDo)"/>

                            <path d="M797 562C830 535 900 515 955 548C1000 590 1030 640 1030 700C1025 790 960 870 935 895C880 950 800 1010 698 1047C650 1020 620 980 607 943z" fill="url(#gC)"/>
                            <g clip-path="url(#filC)">
                                <path d="M797 562C860 590 905 650 902 720C897 800 770 890 607 943" fill="none" stroke="#4f6a79" stroke-width="70" filter="url(#shade)"/>
                                <ellipse cx="985" cy="748" rx="26" ry="52" fill="#b4dcf0" filter="url(#soft)"/>
                                <ellipse cx="985" cy="752" rx="20" ry="30" fill="#fff" filter="url(#soft)"/>
                                <ellipse cx="985" cy="752" rx="14" ry="24" fill="#fff" filter="url(#soft)"/>
                            </g>
                            <path d="M955 548C1000 590 1030 640 1030 700C1025 790 960 870 935 895C880 950 800 1010 698 1047L842 1135C980 1080 1060 1010 1120 925C1140 900 1165 860 1172 790C1172 730 1150 680 1093 635z" fill="url(#gCs)"/>
                            <path d="M1093 635L1142 670C1190 710 1213 770 1213 840C1213 920 1190 970 1150 1010C1090 1070 1000 1120 895 1155C865 1157 855 1145 842 1135C980 1080 1060 1010 1120 925C1140 900 1165 860 1172 790C1172 730 1150 680 1093 635z" fill="url(#gCo)"/>

                            <g clip-path="url(#face)">
                                <path d="M0 0H1200V1500H0z" fill="#7b8e9b"/>
                                <path d="M475 560L540 752L52 1370H0V560z" fill="#889ba8"/>
                                <path d="M1028 138L540 752L607 943H950L1100 138z" fill="#657a88"/>
                            </g>

                            <!-- Extrude preview -->
                            <ellipse cx="540" cy="752" rx="125" ry="343" transform="rotate(32.300 540 752)" fill="url(#gCut)" stroke="#ffa50a" stroke-width="7"/>
                            <g clip-path="url(#cut)">
                                <path d="M300 400H800V1100H300z" fill="#7b8e9b"/>
                                <path d="M1028 138L540 752L607 943H950L1100 138z" fill="#6c808c"/>
                                <path d="M475 560L540 752L52 1370H0V560z" fill="#849198"/>
                                <ellipse cx="540" cy="752" rx="125" ry="343" transform="rotate(32.300 540 752)" fill="none" stroke="#ffa50a" stroke-width="7"/>
                            </g>
                            <ellipse cx="575" cy="772" rx="123" ry="341" transform="rotate(32.300 575 772)" fill="#464744" fill-opacity=".6"/>
                            <path d="M733 476C650 470 530 580 440 750C380 860 350 990 378 1040" fill="none" stroke="#3d4a50" stroke-width="3"/>

                            <!-- Edges -->
                            <g fill="none" stroke="#1b2429" stroke-width="3">
                                <path d="M472 560C500 440 560 260 630 170C655 135 680 120 700 130C735 155 735 230 733 370C820 275 950 140 1010 130C1030 128 1028 150 1018 180C990 280 880 440 797 562C860 590 905 650 902 720C897 800 770 890 607 943C580 1050 510 1240 440 1340C410 1380 390 1383 370 1370C345 1340 342 1250 347 1133C270 1230 180 1325 110 1360C75 1378 50 1375 52 1350C60 1280 200 1070 280 940C200 900 170 860 180 770C190 680 350 595 472 560z"/>
                                <path d="M832 100C850 130 862 170 860 215M733 368C745 335 765 310 790 290M472 560L470 528M280 940C255 955 235 975 228 1000"/>
                                <path d="M1145 98C1165 130 1150 200 1110 275L950 545M1298 192C1300 260 1270 330 1230 400L1093 635"/>
                                <path d="M797 562C830 535 900 515 955 548C1000 590 1030 640 1030 700C1025 790 960 870 935 895C880 950 800 1010 698 1047M955 548L1093 635C1150 680 1172 730 1172 790C1165 860 1140 900 1120 925C1060 1010 980 1080 842 1135M1093 635L1142 670"/>
                                <path d="M607 943C625 985 660 1025 698 1047L842 1135C855 1145 865 1157 893 1154M698 1047C670 1150 600 1330 520 1430C480 1490 440 1505 400 1493M842 1135C800 1260 740 1400 680 1490C640 1560 600 1600 550 1580"/>
                                <path d="M347 1133C325 1160 318 1200 320 1250M90 1497C150 1500 240 1420 323 1330M230 1582C280 1588 340 1540 392 1488"/>
                            </g>
                            <g fill="none" stroke="#000" stroke-width="4" stroke-dasharray="5 4">
                                <path d="M470 528C500 400 560 240 640 150C670 110 705 76 750 75C790 74 815 85 835 103L922 160M790 290L862 215L922 160C980 110 1040 76 1090 78C1120 80 1140 90 1155 107L1298 192C1320 205 1337 230 1337 265C1337 330 1310 390 1280 440L1142 670C1190 710 1213 770 1213 840C1213 920 1190 970 1150 1010C1090 1070 1000 1120 895 1155C850 1290 800 1410 740 1510C710 1560 690 1590 640 1600C610 1607 580 1605 540 1575L445 1520L385 1480C350 1450 325 1390 323 1330L320 1250"/>
                                <path d="M470 528C350 565 230 640 190 700C145 765 145 880 160 920C175 970 200 990 225 1002C130 1150 40 1310 30 1370C20 1430 35 1460 90 1495L230 1580C280 1610 330 1600 380 1565L437 1520"/>
                            </g>

                            <!-- Depth handle and cursor -->
                            <path d="M575 773L648 817M663 795L716 860L632 844z" fill="none" stroke="#fff" stroke-width="5"/>
                            <circle cx="825" cy="927" r="14" fill="#111"/>
                            <circle cx="825" cy="927" r="7" fill="#111" stroke="#fff" stroke-width="5"/>
                        </g>

                        <!-- View cube -->
                        <path d="M1744 86c-10 3-17 8-23 14l-5-4-6 16 12-1-3-4c7-7 15-11 25-14z" fill="#d8e4ef"/>
                        <path d="M1689 153l10-7v14z" fill="#d8e4ef"/>
                        <path d="M1744 118l-18 22v16l8 20 10 4z" fill="#d5e1ee"/>
                        <path d="M1744 120l-16 20v17h3l13-16z" fill="#fff"/>
                        <ellipse cx="1735" cy="169" rx="4" ry="7" transform="rotate(-20 1735 169)" fill="#fff"/><circle cx="1744" cy="169" r="4" fill="#fff"/><circle cx="1731" cy="158" r="3" fill="#fff"/>
                        <path d="M1738 141l6-9M1740 144l4-6M1738 136l6 3" stroke="#444" stroke-width="1.500"/>
                        <path d="M1718 149l26 15" stroke="#3030e0" stroke-width="1"/>
                        <text x="1707" y="148" class="axis">Z</text>
                    </svg>

                    <form class="dialog">
                        <div class="dialog-head">
                            <h2>Extrude 2</h2>
                            <button type="button" class="accept" aria-label="Accept"><svg width="18" height="16" viewBox="0 0 18 16"><path d="M2 8l5 5 9-10" fill="none" stroke="#fff" stroke-width="3.500"/></svg></button>
                            <button type="button" class="cancel" aria-label="Cancel"><svg width="12" height="12" viewBox="0 0 12 12"><path d="M1.500 1.500l9 9m0-9l-9 9" stroke="#c22f38" stroke-width="3.500"/></svg></button>
                        </div>
                        <div class="tabs">
                            <button type="button" class="active">Solid</button>
                            <button type="button">Surface</button>
                            <button type="button">Thin</button>
                        </div>
                        <div class="tabs">
                            <button type="button">New</button>
                            <button type="button">Add</button>
                            <button type="button" class="active">Remove</button>
                            <button type="button">Intersect</button>
                        </div>
                        <div class="query focused">
                            <span class="query-label">Faces and sketch regions to extrude</span>
                            <div class="query-item">Faces of Sketch 2<button type="button" class="icon-btn" aria-label="Remove selection"><svg width="9" height="9"><use href="#i-x"/></svg></button></div>
                        </div>
                        <div class="end-type">
                            <select aria-label="End type"><option>Blind</option></select>
                            <svg class="select-caret" width="8" height="4" viewBox="0 0 8 4"><path d="M0 0h8L4 4z" fill="#333"/></svg>
                            <button type="button" class="icon-btn" aria-label="Opposite direction"><svg width="18" height="18" viewBox="0 0 18 18"><path d="M16 1l-3 11-3-2.500L2.500 17 1 15.500 8 8 5 6z" fill="#222"/><path d="M10 17l7-7M17 10l-1 4-2-2z" stroke="#999" fill="#999"/></svg></button>
                        </div>
                        <div class="depth">
                            <label for="depth">Depth</label>
                            <input type="text" id="depth" value="1 mm">
                        </div>
                        <div class="options">
                            <div class="option"><svg width="8" height="14"><use href="#i-chev"/></svg><input type="checkbox" id="direction"><label for="direction">Direction</label></div>
                            <div class="option"><svg width="8" height="14"><use href="#i-chev"/></svg><input type="checkbox" id="offset"><label for="offset">Starting offset</label></div>
                            <div class="option"><input type="checkbox" id="symmetric"><label for="symmetric">Symmetric</label></div>
                            <div class="option"><input type="checkbox" id="draft"><label for="draft">Draft</label></div>
                            <div class="option"><svg width="8" height="14"><use href="#i-chev"/></svg><input type="checkbox" id="second"><label for="second">Second end position</label></div>
                            <div class="option"><input type="checkbox" id="merge"><label for="merge">Merge with all</label></div>
                        </div>
                        <div class="query">
                            <span class="query-label">Merge scope</span>
                            <div class="query-item">flower<button type="button" class="icon-btn" aria-label="Remove flower"><svg width="9" height="9"><use href="#i-x"/></svg></button></div>
                        </div>
                        <div class="dialog-foot">
                            <input type="range" min="0" max="100" value="70" aria-label="Preview opacity">
                            <button type="button" class="final">Final</button>
                            <button type="button" class="icon-btn" aria-label="Extrude help"><svg width="13" height="13" viewBox="0 0 18 18"><circle cx="9" cy="9" r="9" fill="#999"/><path d="M6 7c0-4 6-4 6-.5C12 9 9 8.500 9 11" fill="none" stroke="#fff" stroke-width="2.200"/><circle cx="9" cy="14" r="1.400" fill="#fff"/></svg></button>
                        </div>
                    </form>

                    <div class="connection">
                        <svg width="20" height="20" viewBox="0 0 20 20" fill="none" stroke="#444" stroke-width="2"><path d="M1 8c5-6 13-6 18 0M4 11.500c4-4 8-4 12 0M7 15c2-2 4-2 6 0"/><path d="M10 1v11" stroke="#c94f4f" stroke-width="4"/><circle cx="10" cy="15" r="1" stroke="#c94f4f"/></svg>
                        Poor connection
                    </div>
                </main>
            </div>
        </div>
    </div>
</body>
</html>
```
FILE: styles.css
```css
* {
    box-sizing: border-box;
}
body {
    margin: 0;
    height: 100vh;
    overflow: hidden;
    display: flex;
    flex-direction: column;
    font-family: Roboto, "Liberation Sans", sans-serif;
    font-size: 14px;
    line-height: 16px;
    color: #333;
    background-color: #fff;
}
button, input, select {
    font: inherit;
    color: inherit;
}
button {
    border: none;
    background: none;
    padding: 0;
    cursor: pointer;
}
h1, h2 {
    margin: 0;
}
ul {
    list-style: none;
    margin: 0;
    padding: 0;
}
svg {
    flex: none;
    display: block;
}
.sprite {
    position: absolute;
}
.icon-btn {
    display: flex;
    align-items: center;
}

/* Top bar */
.topbar {
    height: 27px;
    flex: none;
    overflow: hidden;
    background-color: #fafafa;
}
.topbar-inner {
    height: 40px;
    margin-top: -12px;
    display: flex;
    align-items: center;
}
.brand {
    width: 54px;
    height: 34px;
    display: flex;
    align-items: center;
    gap: 2px;
    background-color: #fff;
}
.brand-name {
    font-family: "Liberation Sans", sans-serif;
    font-size: 20px;
    line-height: 20px;
    font-weight: bold;
    color: #000;
}
.menu {
    margin: 0 12px 0 13px;
}
.doc-name {
    font-size: 23px;
    line-height: 24px;
    font-weight: bold;
}
.workspace-name {
    margin-left: 9px;
    padding-top: 4px;
    font-size: 16px;
    color: #999;
}
.link {
    margin-left: 8px;
}
.learn {
    margin-left: 32px;
}
.topbar-right {
    margin: 0 -10px 0 auto;
    display: flex;
    align-items: center;
    gap: 13px;
}
.share {
    width: 60px;
    height: 32px;
    border-radius: 4px;
    background-color: #1651b0;
    color: #fff;
    font-weight: bold;
}
.help {
    gap: 7px;
}

/* Left rail */
.main {
    flex: 1;
    min-height: 0;
    display: flex;
}
.rail {
    width: 25px;
    flex: none;
    border-top: 1px solid #d5d5d5;
    border-right: 1px solid #d5d5d5;
    background-color: #fafafa;
}
.rail button {
    display: flex;
    align-items: center;
    height: 35px;
}
.rail hr {
    margin: 0;
    border: none;
    border-top: 1px solid #d5d5d5;
}

/* Toolbar */
.studio {
    flex: 1;
    min-width: 0;
    display: flex;
    flex-direction: column;
}
.toolbar {
    height: 36px;
    flex: none;
    display: flex;
    align-items: center;
    padding-left: 1px;
    overflow: hidden;
}
.tool {
    width: 34px;
    height: 32px;
    flex: none;
    display: flex;
    align-items: center;
    justify-content: center;
}
.sketch {
    width: 85px;
    gap: 5px;
}
.drop {
    width: 18px;
    height: 32px;
    flex: none;
    display: flex;
    align-items: center;
    padding-left: 2px;
}
.sep {
    width: 2px;
    height: 26px;
    margin: 0 1px;
    flex: none;
    background-color: #d5d5d5;
}
.variable {
    font-family: "Liberation Serif", serif;
    font-size: 18px;
    font-weight: bold;
}
.be {
    width: 20px;
    height: 20px;
    border: 1px solid #999;
    border-radius: 3px;
    font-size: 11px;
    line-height: 18px;
}
.search-tools {
    width: 180px;
    height: 32px;
    flex: none;
    margin-left: 11px;
    padding: 0 10px;
    border: none;
    border-radius: 4px;
    background-color: #ededed;
}
.search-tools::placeholder {
    color: #333;
}

/* Feature tree */
.workspace {
    flex: 1;
    min-height: 0;
    display: flex;
}
.tree {
    width: 206px;
    flex: none;
    padding-top: 7px;
    border-top: 1px solid #d5d5d5;
    border-right: 1px solid #d5d5d5;
    background-color: #fff;
}
.filter {
    display: flex;
    align-items: center;
    gap: 12px;
    padding: 0 8px 0 9px;
}
.filter input {
    flex: 1;
    min-width: 0;
    height: 30px;
    padding: 2px 6px 0;
    border: 1px solid #999;
    border-radius: 3px;
}
.filter input::placeholder {
    font-style: italic;
    color: #777;
}
.tree-head {
    height: 31px;
    padding: 2px 22px 0 4px;
    display: flex;
    align-items: center;
    gap: 15px;
}
.tree-head h2 {
    flex: 1;
    font-size: 14px;
    font-weight: 500;
}
.features > li,
.nested li {
    height: 24px;
    margin: 0 5px 2px 0;
    padding-left: 6px;
    display: flex;
    align-items: center;
    gap: 4px;
}
.features li svg {
    opacity: .8;
}
.features > .folder {
    padding-left: 4px;
    gap: 7px;
}
.features > .nested {
    display: block;
    height: auto;
    margin: 0 5px 2px 9px;
    padding: 0;
    border-left: 1px solid #ccc;
}
.nested li {
    padding-left: 15px;
    margin-right: 0;
}
.nested li:last-child {
    margin-bottom: 0;
}
.features > .hidden-sketch {
    position: relative;
    color: #999;
}
.features li .badge {
    position: absolute;
    left: 13px;
    top: 10px;
    opacity: 1;
}
.features > .hovered {
    background-color: #eaeef5;
    border-bottom: 1px solid #83c5ea;
}
.features > .selected {
    background-color: #b1dcf6;
    font-weight: bold;
}
.rolled {
    font-style: italic;
    color: #999;
}
.features .rolled svg {
    opacity: .45;
}
.rollback {
    height: 7px;
    margin: 11px 10px 0 5px;
    background-color: #adadad;
}
.parts {
    margin: 19px 5px 0 0;
    padding-top: 1px;
    border-top: 1px solid #d5d5d5;
}
.parts > li {
    margin-right: 0;
}
.features > .part {
    padding-left: 25px;
}

/* Viewport */
.viewport {
    flex: 1;
    min-width: 0;
    position: relative;
    overflow: hidden;
    background-color: #ecf1f5;
}
.scene {
    width: 100%;
    height: 100%;
}
.axis {
    font-size: 14px;
    fill: #2020d0;
}
.connection {
    position: absolute;
    left: 5px;
    bottom: -9px;
    height: 24px;
    padding: 0 13px 2px 5px;
    display: flex;
    align-items: center;
    gap: 5px;
    border-radius: 4px;
    background-color: rgba(255, 255, 255, .7);
    color: #555;
}

/* Extrude dialog */
.dialog {
    position: absolute;
    left: 0;
    top: 3px;
    width: 220px;
    background-color: rgba(255, 255, 255, .97);
    box-shadow: 0 3px 10px rgba(0, 0, 0, .3);
}
.dialog-head {
    height: 29px;
    display: flex;
    border-bottom: 1px solid #d5d5d5;
}
.dialog-head h2 {
    flex: 1;
    padding-left: 6px;
    font-size: 14px;
    line-height: 28px;
    font-weight: 500;
}
.accept,
.cancel {
    width: 28px;
    display: flex;
    align-items: center;
    justify-content: center;
}
.accept {
    background-color: #009500;
}
.tabs {
    height: 28px;
    display: flex;
    border-bottom: 1px solid #d5d5d5;
    overflow: hidden;
}
.tabs button {
    flex: auto;
    padding: 0 8px 2px;
    border-bottom: 2px solid transparent;
}
.tabs .active {
    border-bottom-color: #1651b0;
    color: #1651b0;
    font-weight: 500;
}
.query {
    height: 44px;
    margin: 0 3px;
    padding: 3px 5px 0;
    border: 1px solid #ccc;
    color: #555;
}
.query.focused {
    margin-top: 5px;
    border-color: #1651b0;
    border-radius: 1px;
    background-color: #dceefa;
}
.query-label {
    display: block;
    font-size: 10px;
}
.query-item {
    display: flex;
    justify-content: space-between;
    align-items: center;
    height: 24px;
    padding: 0 6px 0 1px;
}
.end-type {
    height: 31px;
    margin-right: 26px;
    padding-top: 5px;
    display: flex;
    align-items: center;
    position: relative;
    border-bottom: 1px solid #d5d5d5;
}
.end-type select {
    flex: 1;
    height: 24px;
    padding: 0 6px;
    border: none;
    background: none;
    appearance: none;
}
.select-caret {
    position: absolute;
    right: 6px;
}
.end-type .icon-btn {
    width: 18px;
    margin-right: -22px;
}
.depth {
    height: 28px;
    margin-right: 26px;
    padding-left: 5px;
    display: flex;
    gap: 4px;
    align-items: flex-end;
    color: #666;
}
.depth label {
    padding-bottom: 2px;
}
.depth input {
    flex: 1;
    min-width: 0;
    height: 22px;
    padding: 0 2px;
    border: none;
    border-bottom: 1px solid #ccc;
    background: none;
    color: #333;
    text-align: right;
}
.options {
    padding: 1px 0 6px 4px;
    color: #666;
}
.option {
    height: 27px;
    display: flex;
    align-items: center;
}
.option svg {
    margin: 0 10px 0 2px;
}
.option input {
    width: 12px;
    height: 12px;
    margin: 0 4px 0 0;
    border: 1px solid #777;
    border-radius: 3px;
    background-color: #fff;
    appearance: none;
}
.dialog-foot {
    height: 33px;
    padding: 5px 4px 0 7px;
    display: flex;
    align-items: center;
}
.dialog-foot input {
    width: 112px;
    height: 14px;
    margin: 0 26px 0 0;
    background: linear-gradient(#777, #777) center / 100% 2px no-repeat;
    appearance: none;
}
.dialog-foot input::-webkit-slider-thumb {
    width: 11px;
    height: 11px;
    border-radius: 50%;
    background-color: #fff;
    box-shadow: 0 0 3px #333;
    appearance: none;
}
.final {
    width: 49px;
    height: 22px;
    margin-right: 9px;
    border: 1px solid #999;
    border-radius: 3px;
    background-color: #fff;
}
```
